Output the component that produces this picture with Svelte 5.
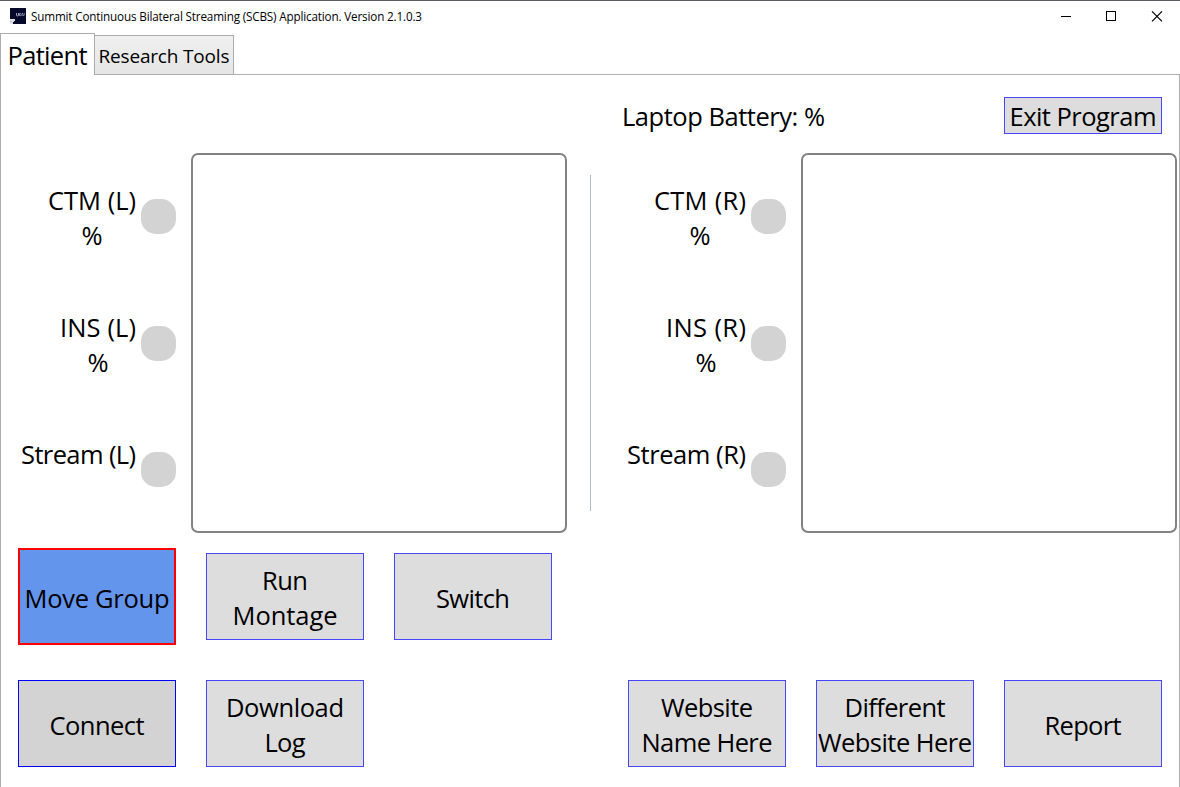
<script>
  // Spreads a line's letters so that it occupies the given width.
  function fit(node, width) {
    const n = node.textContent.length;
    const natural = node.getBoundingClientRect().width;
    const gap = (width - natural) / (n - 1);
    node.style.letterSpacing = gap + 'px';
    node.style.marginRight = -gap + 'px';
  }

  const sides = [
    {
      key: 'left',
      rows: [
        { label: 'CTM (L)', w: 88, value: '%' },
        { label: 'INS (L)', w: 76, value: '%' },
        { label: 'Stream (L)', w: 115, value: '' }
      ]
    },
    {
      key: 'right',
      rows: [
        { label: 'CTM (R)', w: 92, value: '%' },
        { label: 'INS (R)', w: 80, value: '%' },
        { label: 'Stream (R)', w: 119, value: '' }
      ]
    }
  ];

  const actions = [
    { kind: 'move', lines: [['Move Group', 145]] },
    { kind: '', lines: [['Run', 46], ['Montage', 105]] },
    { kind: '', lines: [['Switch', 74]] }
  ];
  const bottomLeft = [
    { kind: 'connect', lines: [['Connect', 95]] },
    { kind: '', lines: [['Download', 118], ['Log', 41]] }
  ];
  const bottomRight = [
    { kind: '', lines: [['Website', 92], ['Name Here', 131]] },
    { kind: '', lines: [['Different', 101], ['Website Here', 154]] },
    { kind: '', lines: [['Report', 77]] }
  ];
</script>

{#snippet buttons(list)}
  {#each list as b}
    <button class="btn {b.kind}">
      {#each b.lines as [text, w]}
        <span class="line"><span class="fit" use:fit={w}>{text}</span></span>
      {/each}
    </button>
  {/each}
{/snippet}

<div class="window">
  <header class="titlebar">
    <svg class="logo" width="16" height="16" viewBox="0 0 16 16">
      <rect width="16" height="16" fill="#06092b" />
      <path d="M0 11h5v2H4v1H3v2H0z" fill="#dddfe3" />
      <path d="M0 13h2v1H0z" fill="#b9bbc4" />
      <path d="M6.5 5v2q0 1 1 1t1-1V5M10.8 5.6H9.6v2h1.2M12 8V5.6h1.2M14.5 5.5l-1 2.5" fill="none" stroke="#aeb2c4" stroke-width=".9" />
    </svg>
    <span class="title"><span class="fit" use:fit={391}>Summit Continuous Bilateral Streaming (SCBS) Application. Version 2.1.0.3</span></span>
    <svg class="controls" width="104" height="12" viewBox="0 0 104 12" fill="none" stroke="#000" stroke-width="1">
      <path d="M0 5.5h10" />
      <rect x="45.5" y=".5" width="9" height="9" />
      <path d="M91 .4l10 10M101 .4l-10 10" stroke-width="1.2" />
    </svg>
  </header>

  <nav class="tabs">
    <div class="tab active"><span class="fit" use:fit={80}>Patient</span></div>
    <div class="tab"><span class="fit" use:fit={131}>Research Tools</span></div>
    <div class="rest"></div>
  </nav>

  <main>
    <div class="top">
      <span class="battery"><span class="fit" use:fit={203}>Laptop Battery: %</span></span>
      <button class="btn exit"><span class="line"><span class="fit" use:fit={147}>Exit Program</span></span></button>
    </div>

    <div class="sides">
      {#each sides as side}
        <section class={side.key}>
          <div class="status">
            {#each side.rows as row}
              <div class="row">
                <div class="label">
                  <span class="line"><span class="fit" use:fit={row.w}>{row.label}</span></span>
                  <span class="line">{row.value}</span>
                </div>
                <i class="lamp"></i>
              </div>
            {/each}
          </div>
          <div class="log"></div>
        </section>
        {#if side.key === 'left'}<div class="divider"></div>{/if}
      {/each}
    </div>

    <div class="actions">{@render buttons(actions)}</div>
    <div class="bottom">
      <div class="group">{@render buttons(bottomLeft)}</div>
      <div class="group">{@render buttons(bottomRight)}</div>
    </div>
  </main>
</div>

<style>
  :global(body) { margin: 0; background: #fff; overflow: hidden; }
  .window {
    box-sizing: border-box;
    width: 1180px;
    height: 787px;
    display: flex;
    flex-direction: column;
    border-top: 1px solid #5d5b62;
    background: #fff;
    color: #000;
    font: 25.5px/35px "Open Sans", "Noto Sans", sans-serif;
    white-space: nowrap;
  }
  .fit { display: inline-block; }
  .titlebar {
    height: 32px;
    flex: none;
    box-sizing: border-box;
    display: flex;
    align-items: flex-start;
    padding: 7px 15px 0 10px;
  }
  .logo { flex: none; }
  .title { margin-left: 5px; font-size: 11.7px; line-height: 17px; }
  .controls { margin: 3px 0 0 auto; }
  .tabs { height: 42px; flex: none; display: flex; align-items: flex-end; }
  .tab {
    box-sizing: border-box;
    display: flex;
    align-items: center;
    justify-content: center;
    width: 139px;
    height: 40px;
    border: 1px solid #acacac;
    border-left: 0;
    background: linear-gradient(#f0f0f0, #e5e5e5);
    font-size: 19px;
    padding-top: 2px;
  }
  .tab.active {
    width: 95px;
    height: 42px;
    border-left: 1px solid #acacac;
    border-bottom: 0;
    background: #fff;
    font-size: 25.5px;
  }
  .rest { flex: 1; border-bottom: 1px solid #acacac; }
  main {
    flex: 1;
    box-sizing: border-box;
    border: solid #acacac;
    border-width: 0 1px;
    display: flex;
    flex-direction: column;
  }
  .top {
    height: 78px;
    box-sizing: border-box;
    display: flex;
    justify-content: space-between;
    padding: 21.5px 17px 0 621px;
  }
  .battery { padding-top: 2px; }
  .sides { display: flex; height: 380px; }
  section { display: flex; width: 566px; }
  .status { width: 190px; display: flex; flex-direction: column; }
  .row {
    flex: 1;
    display: flex;
    align-items: center;
    justify-content: flex-end;
    gap: 5px;
    padding-right: 15px;
  }
  .label { padding-top: 4px; text-align: center; }
  .line { display: block; height: 35px; }
  .lamp { width: 35px; height: 35px; border-radius: 15px; background: #d3d3d3; }
  .log {
    box-sizing: border-box;
    width: 376px;
    border: 2px solid #828282;
    border-radius: 7px;
  }
  .divider { width: 1px; height: 336px; margin: 22px 20px 0 23px; background: #b4bac6; }
  .actions { height: 97px; margin-top: 15px; padding-left: 17px; display: flex; gap: 30px; align-items: center; }
  .bottom { margin-top: 35px; padding: 0 17px; display: flex; justify-content: space-between; }
  .group { display: flex; gap: 30px; }
  .btn {
    box-sizing: border-box;
    width: 158px;
    height: 87px;
    flex: none;
    display: flex;
    flex-direction: column;
    align-items: center;
    justify-content: center;
    margin: 0;
    padding: 3px 0 0;
    border: 1px solid #4646fa;
    background: #ddd;
    color: #000;
    font: inherit;
  }
  .exit { height: 37px; }
  .move { height: 97px; border: 2px solid #f00; background: #6495ed; }
  .connect { border-color: #00f; background: #d3d3d3; }
</style>
